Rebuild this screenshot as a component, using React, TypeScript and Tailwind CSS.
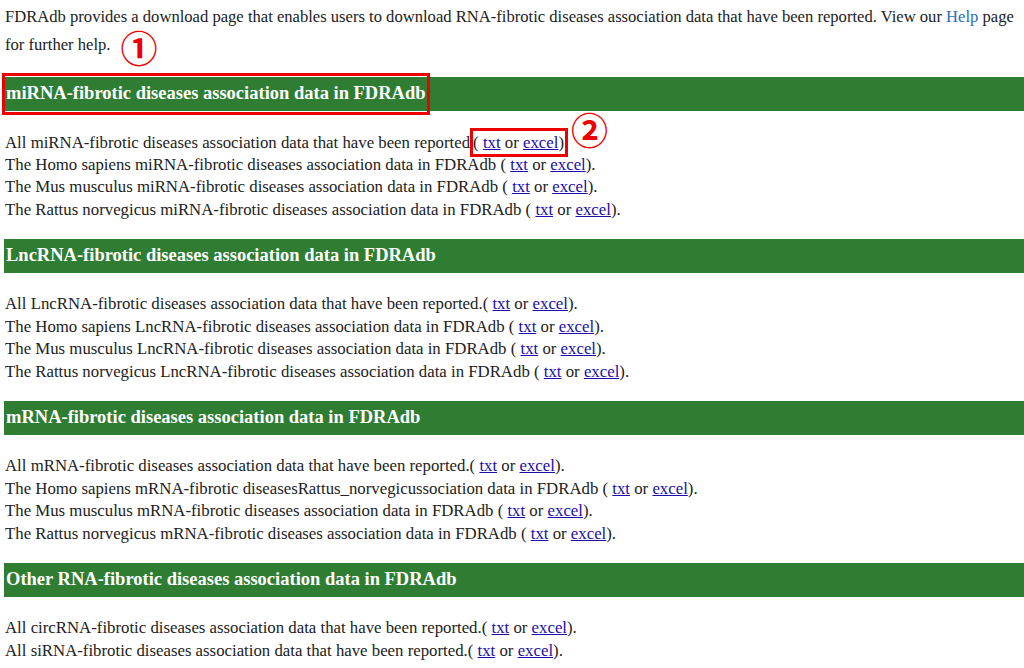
import React from 'react'

type Row = { text: string; mark?: boolean }

const sections: { title: string; rows: Row[]; boxed?: boolean }[] = [
  {
    title: 'miRNA-fibrotic diseases association data in FDRAdb',
    boxed: true,
    rows: [
      { text: 'All miRNA-fibrotic diseases association data that have been reported', mark: true },
      { text: 'The Homo sapiens miRNA-fibrotic diseases association data in FDRAdb ' },
      { text: 'The Mus musculus miRNA-fibrotic diseases association data in FDRAdb ' },
      { text: 'The Rattus norvegicus miRNA-fibrotic diseases association data in FDRAdb ' },
    ],
  },
  {
    title: 'LncRNA-fibrotic diseases association data in FDRAdb',
    rows: [
      { text: 'All LncRNA-fibrotic diseases association data that have been reported.' },
      { text: 'The Homo sapiens LncRNA-fibrotic diseases association data in FDRAdb ' },
      { text: 'The Mus musculus LncRNA-fibrotic diseases association data in FDRAdb ' },
      { text: 'The Rattus norvegicus LncRNA-fibrotic diseases association data in FDRAdb ' },
    ],
  },
  {
    title: 'mRNA-fibrotic diseases association data in FDRAdb',
    rows: [
      { text: 'All mRNA-fibrotic diseases association data that have been reported.' },
      { text: 'The Homo sapiens mRNA-fibrotic diseasesRattus_norvegicussociation data in FDRAdb ' },
      { text: 'The Mus musculus mRNA-fibrotic diseases association data in FDRAdb ' },
      { text: 'The Rattus norvegicus mRNA-fibrotic diseases association data in FDRAdb ' },
    ],
  },
  {
    title: 'Other RNA-fibrotic diseases association data in FDRAdb',
    rows: [
      { text: 'All circRNA-fibrotic diseases association data that have been reported.' },
      { text: 'All siRNA-fibrotic diseases association data that have been reported.' },
    ],
  },
]

function Links() {
  return (
    <>
      ( <a href="#" className="text-[#1a0dab] underline">txt</a> or{' '}
      <a href="#" className="text-[#1a0dab] underline">excel</a>)
    </>
  )
}

const circled = "text-[#e00] font-['Noto_Sans_CJK_SC',sans-serif] font-bold"

export default function App() {
  return (
    <div className="bg-white text-[#222] text-[16.8px] font-['Liberation_Serif',serif]">
      {/* Intro */}
      <p className="pl-[5px] pt-[3px] text-[16.6px] leading-[28px]">
        FDRAdb provides a download page that enables users to download RNA-fibrotic diseases association data that have been reported. View our{' '}
        <a href="#" className="text-[#2a6ebb]">Help</a> page for further help.
        <span className="relative">
          <span className={`absolute left-[10px] -top-[6px] text-[37px] leading-none ${circled}`}>①</span>
        </span>
      </p>

      {sections.map((s, i) => (
        <div key={i} className={i === 0 ? 'mt-[18px]' : ''}>
          <div className="pl-1">
            <div className="relative h-[34px] bg-[#2e7d32] flex items-center">
              <h2 className="pl-[2px] text-white font-bold text-[18.5px]">{s.title}</h2>
              {s.boxed && (
                <div className="absolute -left-[2px] -top-[4px] w-[428px] h-[42px] border-[3px] border-[#e00]" />
              )}
            </div>
          </div>
          <div className="pl-[5px] pt-[20.5px] pb-[17.8px] leading-[22.4px]">
            {s.rows.map((r, j) => (
              <div key={j} className="whitespace-nowrap">
                {r.text}
                {r.mark ? (
                  <span className="relative border-[3px] border-[#e00] py-[2px] pr-[1px]">
                    <Links />
                    <span className={`absolute left-full ml-[6px] -top-[20px] text-[37px] leading-none ${circled}`}>②</span>
                  </span>
                ) : (
                  <>
                    <Links />.
                  </>
                )}
              </div>
            ))}
          </div>
        </div>
      ))}
    </div>
  )
}
